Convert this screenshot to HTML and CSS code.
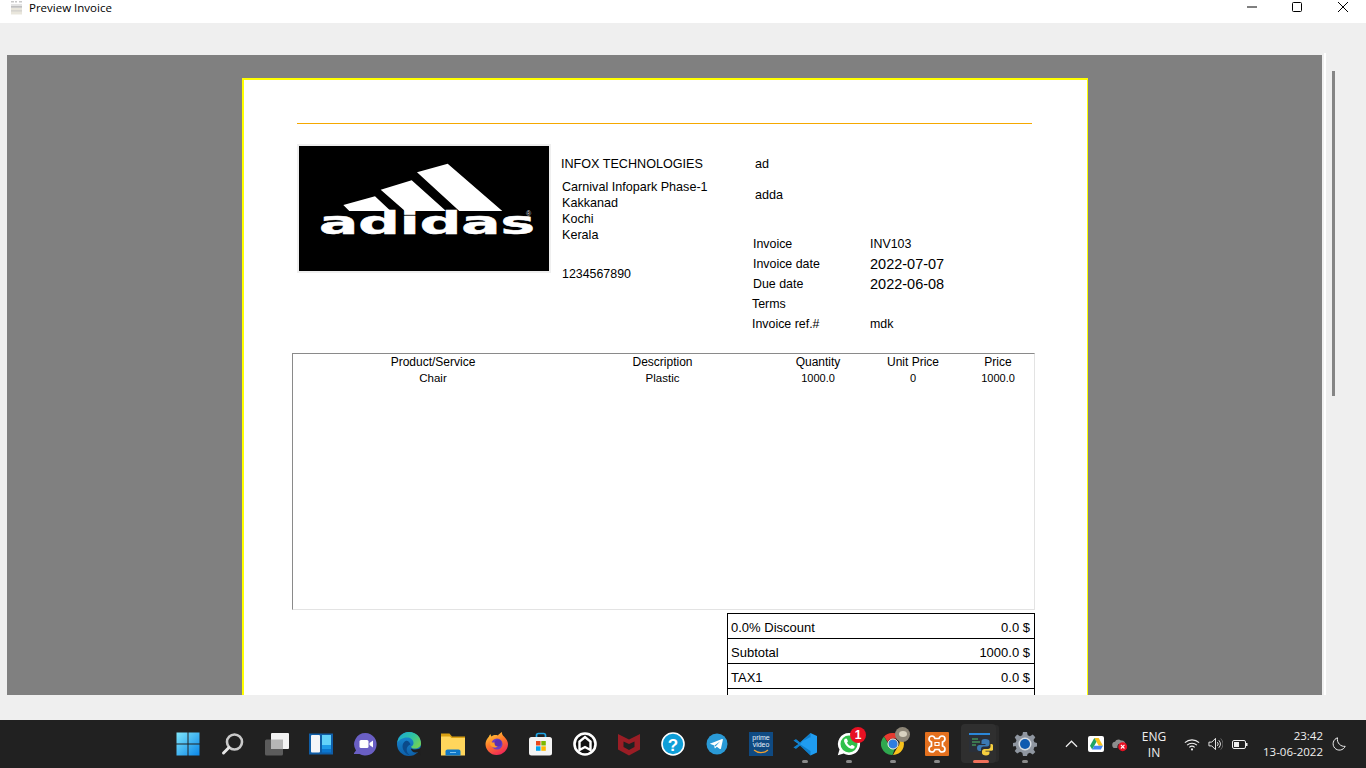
FILE: index.html
```html
<!DOCTYPE html>
<html lang="en">
<head>
<meta charset="utf-8">
<title>Preview Invoice</title>
<link rel="stylesheet" href="styles.css">
</head>
<body>
<div class="window">
  <header class="titlebar">
    <svg class="app-icon" viewBox="0 0 13 14"><path d="M1 0h3v1.500H1zM5 0h2v1.500H5zM9 0h3v1.500H9z" fill="#c8c8c8"/><path d="M1 3h11v3H1z" fill="#e4e4e4"/><path d="M1 5.500h11v1H1z" fill="#9a9a9a"/><path d="M1 7h11v6.500H1z" fill="#e9e6dc"/><path d="M1 9.500h11v.8H1z" fill="#c4c4c4"/></svg>
    <span class="title">Preview Invoice</span>
    <div class="win-btns">
      <span class="win-btn win-min"><svg viewBox="0 0 12 12" class="wb"><path d="M1 6h10" stroke="#000" fill="none"/></svg></span>
      <span class="win-btn"><svg viewBox="0 0 12 12" class="wb"><rect x="1.500" y="1.500" width="9" height="9" rx="1" stroke="#000" fill="none"/></svg></span>
      <span class="win-btn"><svg viewBox="0 0 12 12" class="wb"><path d="M1 1l10 10M11 1L1 11" stroke="#000" fill="none"/></svg></span>
    </div>
  </header>

  <main class="workspace">
    <div class="viewer-edge">
      <div class="viewer">
        <article class="paper">
          <div class="rule"></div>
          <section class="head">
            <div class="logo">
              <svg class="logo-svg" viewBox="0 0 250 125">
                <path fill="#fff" d="M118 26.300L148.700 17.700 203.300 65H160.300zM81.700 43.700L112.700 34.300 147 65H106zM44.300 59L76 50.300 91.700 65H50.300z"/>
                <text class="logo-word" x="20" y="88" textLength="216" lengthAdjust="spacingAndGlyphs">adidas</text>
                <text class="logo-r" x="227" y="70">®</text>
              </svg>
            </div>
            <div class="company">
              <div class="co-name">INFOX TECHNOLOGIES</div>
              <div class="co-addr">Carnival Infopark Phase-1<br>Kakkanad<br>Kochi<br>Kerala</div>
              <div class="co-phone">1234567890</div>
            </div>
            <div class="client">
              <div class="cl-name">ad</div>
              <div class="cl-addr">adda</div>
              <div class="meta">
                <div class="m-label nudge">Invoice</div><div class="m-val">INV103</div>
                <div class="m-label nudge">Invoice date</div><div class="m-date">2022-07-07</div>
                <div class="m-label nudge">Due date</div><div class="m-date">2022-06-08</div>
                <div class="m-label">Terms</div><div class="m-val"></div>
                <div class="m-label">Invoice ref.#</div><div class="m-val">mdk</div>
              </div>
            </div>
          </section>

          <section class="items">
            <div class="cell th">Product/Service</div><div class="cell th desc">Description</div><div class="cell th">Quantity</div><div class="cell th">Unit Price</div><div class="cell th">Price</div>
            <div class="cell">Chair</div><div class="cell desc">Plastic</div><div class="cell num">1000.0</div><div class="cell num">0</div><div class="cell num">1000.0</div>
          </section>

          <section class="totals">
            <div class="t-row"><span>0.0% Discount</span><span>0.0 $</span></div>
            <div class="t-row"><span>Subtotal</span><span>1000.0 $</span></div>
            <div class="t-row"><span>TAX1</span><span>0.0 $</span></div>
            <div class="t-row"></div>
          </section>
        </article>
      </div>
    </div>
    <div class="scroll"><div class="thumb"></div></div>
  </main>

  <footer class="taskbar">
    <div class="apps">
      <span class="tb tb-start"><svg class="ic" viewBox="0 0 24 24"><defs><linearGradient id="w" x1="0" y1="0" x2="1" y2="1"><stop offset="0" stop-color="#7fe6fb"/><stop offset="1" stop-color="#0a86e8"/></linearGradient></defs><path fill="url(#w)" d="M.500.500h11v11H.500zM12.500.500h11v11h-11zM.500 12.500h11v11H.500zM12.500 12.500h11v11h-11z"/></svg></span>
      <span class="tb"><svg class="ic" viewBox="0 0 24 24"><circle cx="13.500" cy="10" r="7.500" fill="none" stroke="#c9c9c9" stroke-width="2.600"/><path d="M8 15.500L2.500 21" stroke="#e6e6e6" stroke-width="3" stroke-linecap="round"/></svg></span>
      <span class="tb"><svg class="ic" viewBox="0 0 24 24"><rect x="0" y="7.500" width="18" height="16" rx="1.500" fill="#5c5c5c"/><rect x="6" y="1" width="18" height="16" rx="1" fill="#f2f2f2"/><rect x="6" y="7.500" width="12" height="9.500" fill="#b5b5b5"/></svg></span>
      <span class="tb"><svg class="ic" viewBox="0 0 24 24"><rect y="1.500" width="24" height="21" fill="#0f5ea8"/><rect x="2" y="3" width="9" height="17.500" rx="1" fill="#f4f6f8"/><rect x="13" y="3" width="9" height="10" fill="#62d2fa"/><rect x="13" y="13" width="9" height="4" fill="#1e9be8"/><rect x="13" y="17" width="9" height="3.500" fill="#0b77d0"/></svg></span>
      <span class="tb"><svg class="ic" viewBox="0 0 24 24"><path fill="#6a5fc4" d="M12.500 1a11.300 11.300 0 1 1-6 21H1.500c-.6 0-.8-.6-.4-1l1.900-2.500A11.300 11.300 0 0 1 12.500 1z"/><rect x="6.500" y="8" width="9" height="8" rx="1.500" fill="#fff"/><path fill="#fff" d="M16.500 11l3.500-2.500v7L16.500 13z"/></svg></span>
      <span class="tb"><svg class="ic" viewBox="0 0 24 24"><defs><linearGradient id="eb" x1="0" y1="0" x2="0" y2="1"><stop offset="0" stop-color="#1a8fd6"/><stop offset="1" stop-color="#0d5fa8"/></linearGradient><linearGradient id="eg" x1="0" y1="0" x2="1" y2=".6"><stop offset="0" stop-color="#1aa7d8"/><stop offset=".6" stop-color="#2fc4a0"/><stop offset="1" stop-color="#6fd05a"/></linearGradient></defs><circle cx="12" cy="12" r="12" fill="url(#eb)"/><path fill="url(#eg)" d="M12 0c7 0 12 5 12 11.500 0 3.500-3 5-6 5-2.500 0-4-1-4-1.800 1.500-.7 2.500-2 2.500-3.700 0-3.500-3.300-5.500-6.500-5.500C5.500 5.500 2 8 .4 10.500 1.300 4.500 6 0 12 0z"/><path fill="#0b4a8a" d="M8.500 9c-3 1.500-4 6-1.500 10 1.500 2.400 4 4 6.500 4.700-3-2-4.500-5-3.500-8 .5-1.500 2-2.700 3.500-3.200-1-2.500-3-4.500-5-3.500z"/><path fill="#202020" d="M24 15.500c-1 1.200-3.500 2-6 2-1.500 0-3-.3-4-1 0 3 3.500 5 6.500 3.500L24 24z"/></svg></span>
      <span class="tb"><svg class="ic" viewBox="0 0 24 24"><path fill="#d9a012" d="M0 1.500h8.500l2.500 3h13v4H0z"/><path fill="#ffd65c" d="M0 4.500h9l1.500 1.500H24v17.500H0z"/><path fill="#0f78c8" d="M4.500 19.500c0-1.200.8-2 2-2h11c1.200 0 2 .8 2 2v4h-15z"/><path fill="#7cc3f2" d="M9 20h6v1H9z"/></svg></span>
      <span class="tb"><svg class="ic" viewBox="0 0 24 24"><defs><linearGradient id="ff" x1=".2" y1="0" x2=".7" y2="1"><stop offset="0" stop-color="#ffd43a"/><stop offset=".45" stop-color="#ff7a2a"/><stop offset="1" stop-color="#f0225a"/></linearGradient></defs><path fill="url(#ff)" d="M4 4.500C4.500 3 5 2.500 5.500 2c0 1 .3 1.700 1 2.500C8.500 3 11 2.700 13 3.500c.5-1.200 2.500-2.500 4-3.500-.3 1.500.4 3 2 4.500 2.500 2.500 4 5 4 7.500 0 6-5 11-11.500 11C5.500 23 .5 18 .5 12 .5 9.500 2 6.500 4 4.500z"/><circle cx="12" cy="12" r="5.500" fill="#6a3fc4"/><path fill="#ff9a2a" d="M5 9c2 2.500 4 1 6.500 1.500 2 .5 2.500 2.500 1 4-1 1-3 1.500-5 .5C5.500 14.500 4.500 12 5 9z"/><circle cx="13" cy="11" r="3.500" fill="#5b2fb0"/></svg></span>
      <span class="tb"><svg class="ic" viewBox="0 0 24 24"><path fill="none" stroke="#1ea5e6" stroke-width="1.700" d="M7.500 6.500V3.500c0-1 .7-2 2-2h5c1.300 0 2 1 2 2v3"/><rect y="5" width="23" height="18.500" rx="2.500" fill="#f4f4f4"/><path fill="#e8491d" d="M7 9h4.500v4.500H7z"/><path fill="#7db900" d="M12.300 9h4.500v4.500h-4.500z"/><path fill="#00a4ef" d="M7 14.300h4.500v4.500H7z"/><path fill="#ffb900" d="M12.300 14.300h4.500v4.500h-4.500z"/></svg></span>
      <span class="tb"><svg class="ic" viewBox="0 0 24 24"><circle cx="12" cy="12" r="10.500" fill="#111" stroke="#fff" stroke-width="2.600"/><path fill="none" stroke="#fff" stroke-width="2.400" d="M6.500 18V9.500L12 5l5.500 4.500V18L12 15z"/></svg></span>
      <span class="tb"><svg class="ic" viewBox="0 0 24 24"><path fill="#9a1d25" d="M1 2l11 5.500L23 2v15.500L12 23.500 1 17.500zM6.500 9.500v5.500L12 18l5.500-3V9.500L12 12z"/></svg></span>
      <span class="tb"><svg class="ic" viewBox="0 0 24 24"><circle cx="12" cy="12" r="11" fill="#0e9ed8" stroke="#fff" stroke-width="1.600"/><text class="help-q" x="12" y="18.500" text-anchor="middle">?</text></svg></span>
      <span class="tb"><svg class="ic" viewBox="0 0 24 24"><circle cx="12" cy="12" r="10.500" fill="#2a9ad6"/><path fill="#fff" d="M5.500 11.500L17 7c.6-.2 1 .2.900.8L16 16.500c-.1.600-.7.800-1.200.4l-3-2.200-1.500 1.500c-.3.300-.7.100-.7-.3l-.3-2.500-3.800-1.300c-.6-.2-.6-.5 0-.6z"/><path fill="#2a9ad6" d="M9.500 13.500l5.500-4-4.500 5z"/></svg></span>
      <span class="tb"><span class="prime"><span class="prime-w">prime</span><span class="prime-w">video</span><svg class="prime-arc" viewBox="0 0 16 5"><path d="M1 1c4 3.500 10 3.500 14 0" fill="none" stroke="#f0a030" stroke-width="1.200"/></svg></span></span>
      <span class="tb"><svg class="ic" viewBox="0 0 24 24"><path fill="#1f9cf0" d="M17.500 1L24 4v16.500L17.500 23.500 7 13.500l-4 3.200L.5 15.500 5.500 12 .5 8.500 3 7.300l4 3.200z"/><path fill="#0065a9" d="M17.500 1v22.500L7 13.500 3 16.700.5 15.500 5.500 12l2 .5 10 6.500V5L7 10.500 3 7.300.5 8.500l6.500 3.500z" opacity=".55"/></svg><i class="dot"></i></span>
      <span class="tb"><svg class="ic" viewBox="0 0 24 24"><path fill="#fff" d="M12 1a11 11 0 1 1-5.300 20.600L.8 23.300l1.700-5.700A11 11 0 0 1 12 1z"/><circle cx="12" cy="12" r="8.500" fill="#31c04a"/><path fill="#fff" d="M8.500 6.800c.6-.4 1.200-.3 1.500.3l.8 1.800c.2.400 0 .8-.2 1.100l-.6.700c.8 1.500 2 2.700 3.500 3.400l.8-.8c.3-.3.700-.4 1.100-.2l1.800.9c.5.300.6.800.3 1.400-.7 1.300-2 1.700-3.400 1.300-3.300-1-6-3.700-6.900-7-.3-1.200 0-2.200.8-2.900z"/></svg><span class="badge">1</span><i class="dot"></i></span>
      <span class="tb"><svg class="ic" viewBox="0 0 24 24"><path fill="#e53a30" d="M12 1a11 11 0 0 1 9.500 5.500H12a5.500 5.500 0 0 0-5.200 3.500L3 4.500A11 11 0 0 1 12 1z"/><path fill="#f8c21c" d="M21.500 6.500A11 11 0 0 1 12 23l4.700-8.200A5.500 5.500 0 0 0 16.800 6.500z"/><path fill="#2fa84f" d="M3 4.500l4.700 8.100a5.500 5.500 0 0 0 6 4.100L11.500 23A11 11 0 0 1 3 4.500z"/><circle cx="12" cy="12" r="4.500" fill="#2f7de0"/><circle cx="12" cy="12" r="5" fill="none" stroke="#fff"/></svg><span class="avatar"><i class="avatar-in"></i></span><i class="dot"></i></span>
      <span class="tb"><svg class="ic" viewBox="0 0 24 24"><rect width="24" height="24" rx="1" fill="#e4701e"/><path fill="none" stroke="#fff" stroke-width="1.700" d="M7 4a3 3 0 0 0-3 3c0 1.500 1 2.500 2.500 3v4C5 14.500 4 15.500 4 17a3 3 0 0 0 3 3c1.500 0 2.500-1 3-2.500h4c.5 1.500 1.500 2.500 3 2.500a3 3 0 0 0 3-3c0-1.500-1-2.500-2.500-3v-4C19 9.500 20 8.500 20 7a3 3 0 0 0-3-3c-1.500 0-2.500 1-3 2.500h-4C9.500 5 8.500 4 7 4z"/><path d="M10 10.500h4v3h-4z" fill="none" stroke="#fff" stroke-width="1.200"/></svg><i class="dot"></i></span>
      <span class="tb active"><svg class="ic" viewBox="0 0 24 24"><rect x="0" y="1" width="21" height="19" fill="#2a2f38"/><rect x="0" y="1" width="21" height="2" fill="#2b87d8"/><path d="M3 7h6M3 10h8M3 13h4" stroke="#4ec06a" stroke-width="1"/><path fill="#3a79b4" d="M15 7c-3 0-3.500 1-3.500 2.500V12h4v1h-6c-1.500 0-2.500 1-2.500 3s1 3 2.500 3H11v-2c0-1.500 1-2.500 2.500-2.500h3.500c1.500 0 2.500-1 2.500-2.500V9.500C19.500 8 18 7 15 7z" transform="translate(1 0)"/><path fill="#f7cf3e" d="M21.500 12v2.500c0 1.500-1 2.500-2.500 2.500h-3.500c-1.500 0-2.500 1-2.500 2.500V21c0 1.500 1.500 2.500 4 2.500s3.500-1 3.500-2.500v-1.500h-4v-.8h6c1.500 0 2-1.200 2-3.200s-.8-3.500-2-3.500z"/></svg><i class="run"></i></span>
      <span class="tb"><svg class="ic" viewBox="0 0 24 24"><path fill="#8f96a0" d="M10 0h4l.7 3.300 2.200.9L19.800 2.500l2.500 2.700-1.800 2.700.9 2.300L24 11v3.500l-2.600.6-.9 2.300 1.800 2.700-2.500 2.400-2.900-1.700-2.200.9L14 24h-4l-.7-3.300-2.200-.9-2.900 1.700-2.500-2.400 1.800-2.700-.9-2.300L0 14.500V11l2.600-.5.9-2.300L1.700 5.200l2.500-2.700 2.900 1.700 2.200-.9z"/><circle cx="12" cy="12" r="6.500" fill="#d8dde2"/><circle cx="12" cy="12" r="5" fill="#0f5bb0"/></svg><i class="dot"></i></span>
    </div>
    <div class="tray">
      <svg class="chev" viewBox="0 0 14 8"><path d="M1 7l6-6 6 6" fill="none" stroke="#eee" stroke-width="1.300"/></svg>
      <span class="drive"><svg viewBox="0 0 12 11" class="drive-svg"><path fill="#f8c21c" d="M4 0h4l4 7H8z"/><path fill="#1fa463" d="M4 0l2 3.500L2 10.500 0 7z"/><path fill="#4285f4" d="M4 7h8l-2 3.500H2z"/></svg></span>
      <svg class="cloud" viewBox="0 0 18 16"><path fill="#8d8d8d" d="M4 12a3.500 3.500 0 0 1-.5-7C4.500 2.500 8 1.500 10 3.500c2.500-.5 5 1 5 4H8c-1.500 0-2 2-2 4.500z"/><circle cx="12" cy="10.500" r="5" fill="#e81123"/><path d="M10 8.500l4 4M14 8.500l-4 4" stroke="#fff" stroke-width="1.200"/></svg>
      <div class="lang"><div>ENG</div><div>IN</div></div>
      <svg class="wifi" viewBox="0 0 18 14"><path d="M1 5a11.500 11.500 0 0 1 16 0M3.500 7.800a8 8 0 0 1 11 0M6 10.300a4.300 4.300 0 0 1 6 0" fill="none" stroke="#eee" stroke-width="1.200"/><circle cx="9" cy="12.500" r="1.200" fill="#eee"/></svg>
      <svg class="vol" viewBox="0 0 16 14"><path d="M1 5h3l4-4v12L4 9H1z" fill="none" stroke="#eee"/><path d="M10 5a3 3 0 0 1 0 4M11.500 3a6 6 0 0 1 0 8" fill="none" stroke="#eee"/><path d="M13.500 1a8.500 8.500 0 0 1 0 12" fill="none" stroke="#666"/></svg>
      <svg class="batt" viewBox="0 0 16 9"><rect x=".5" y=".5" width="13" height="8" rx="1.500" fill="none" stroke="#eee"/><rect x="2" y="2" width="5" height="5" fill="#eee"/><rect x="14" y="3" width="1.500" height="3" fill="#eee"/></svg>
      <div class="clock"><div>23:42</div><div>13-06-2022</div></div>
      <svg class="moon" viewBox="0 0 14 14"><path d="M5.500 .8a6.300 6.300 0 1 0 7.700 8.500C9 10 4.500 6 5.500 .8z" fill="none" stroke="#eee"/></svg>
    </div>
  </footer>
</div>
</body>
</html>
```
FILE: styles.css
```css
* { box-sizing: border-box; }
html, body { margin: 0; height: 100%; overflow: hidden; }
body { font-family: "Liberation Sans", Arial, sans-serif; color: #000; }
.window { width: 1366px; height: 768px; display: flex; flex-direction: column; background: #efefef; }

.titlebar { height: 23px; background: #fff; display: flex; align-items: flex-start; padding-left: 10px; }
.app-icon { width: 13px; height: 14px; margin-top: 1px; }
.title { font: 11.500px/15px "Open Sans", "Noto Sans", sans-serif; margin-left: 6px; }
.win-btns { margin-left: auto; display: flex; }
.win-btn { width: 46px; height: 14px; display: flex; justify-content: center; }
.win-min { padding-left: 2px; }
.wb { width: 12px; height: 12px; margin-top: 1px; }

.workspace { flex: 1; display: flex; padding: 30px 0 25px 7px; min-height: 0; }
.viewer-edge { width: 1319px; padding: 2px 2px 0 0; border-right: 2px solid #fff; }
.viewer { height: 640px; width: 1315px; background: #808080; overflow: hidden; padding: 23px 0 0 235px; }
.scroll { margin-left: 6px; width: 3px; }
.thumb { margin-top: 18px; height: 325px; background: #858585; }

.paper { width: 846px; height: 800px; background: #fff; border: solid #ff0; border-width: 2px 1.500px 0 2px; padding: 43px 0 0 48px; }
.rule { height: 1px; width: 735px; margin-left: 5px; background: #f5a800; }

.head { display: grid; grid-template-columns: 263px 191px 1fr; margin: 21px 0 0 6px; height: 188px; font-size: 12.600px; line-height: 16px; }
.logo { width: 252px; height: 127px; background: #000; border: 1px solid #eee; box-shadow: 0 0 0 1px #efefef; }
.logo-svg { display: block; width: 250px; height: 125px; }
.logo-word { font: bold 32px "DejaVu Sans", sans-serif; fill: #fff; stroke: #fff; stroke-width: .5px; }
.logo-r { font: 7px "Liberation Sans", sans-serif; fill: #ddd; }

.company { padding-top: 11px; }
.co-addr { margin-top: 7px; padding-left: 1px; }
.co-phone { margin-top: 23px; padding-left: 1px; font-size: 12.400px; }

.client { padding-top: 11px; }
.cl-name { padding-left: 3px; }
.cl-addr { margin-top: 15px; padding-left: 3px; }
.meta { display: grid; grid-template-columns: 118px 1fr; grid-auto-rows: 20px; margin-top: 31px; line-height: 20px; font-size: 12.400px; }
.nudge { padding-left: 1px; }
.m-date { font-size: 14.500px; }

.items { width: 743px; height: 257px; margin-top: 20px; border: solid; border-width: 1px; border-color: #8a8a8a #e3e3e3 #e3e3e3 #8a8a8a; display: grid; grid-template-columns: 280px 200px 90px 100px 70px; grid-auto-rows: 17px; align-content: start; font: 11.500px/15px "Liberation Sans", sans-serif; text-align: center; }
.th { font-size: 12px; padding-top: 1px; }
.num { font-size: 11px; }
.desc { padding-right: 21px; }

.totals { width: 308px; margin: 3px 0 0 435px; border: solid #000; border-width: 0 1px; font-size: 13px; }
.t-row { height: 25px; border-top: 1px solid #000; display: flex; justify-content: space-between; align-items: center; padding: 2px 4px 0 3px; }

.taskbar { height: 48px; background: #212121; color: #f0f0f0; display: flex; align-items: center; padding-left: 167px; }
.apps { display: flex; width: 880px; }
.tb { position: relative; width: 44px; height: 48px; display: flex; align-items: center; justify-content: center; }
.tb-start { margin-left: -1px; margin-right: 1px; }
.ic { width: 24px; height: 24px; display: block; }
.help-q { font: bold 17px "Liberation Sans", sans-serif; fill: #fff; }
.dot { position: absolute; left: 19px; bottom: 5px; width: 6px; height: 3px; border-radius: 2px; background: #8a8a8a; }
.active::before { content: ""; position: absolute; left: 2px; top: 4px; width: 35px; height: 39px; border-radius: 4px; background: #2f2f2f; box-shadow: 4px 0 0 -1px #2a2a2a; }
.active .ic { position: relative; }
.run { position: absolute; left: 14px; bottom: 5px; width: 16px; height: 3px; border-radius: 2px; background: #f0705a; }
.prime { width: 24px; height: 24px; background: #0f4a82; display: flex; flex-direction: column; align-items: center; color: #e6f2fa; font: 7px/7px "Liberation Sans", sans-serif; padding-top: 2px; }
.prime-w { display: block; }
.prime-arc { width: 16px; height: 5px; margin-top: 1px; }
.badge { position: absolute; left: 23px; top: 7px; width: 16px; height: 16px; border-radius: 50%; background: #e81123; color: #fff; font: bold 12px/16px "Liberation Sans", sans-serif; text-align: center; }
.avatar { position: absolute; left: 24px; top: 7px; width: 15px; height: 15px; border-radius: 50%; background: #8d8677; }
.avatar-in { display: block; width: 8px; height: 6px; margin: 4px 0 0 4px; border-radius: 50%; background: #d8d2c0; }

.tray { width: 319px; height: 48px; display: flex; align-items: center; }
.chev { width: 13px; height: 8px; margin-left: 18px; }
.drive { width: 16px; height: 16px; background: #fff; border-radius: 2px; margin-left: 10px; display: flex; align-items: center; justify-content: center; }
.drive-svg { width: 13px; height: 12px; }
.cloud { width: 16px; height: 15px; margin-left: 8px; }
.lang { width: 40px; margin-left: 6px; padding-top: 1px; text-align: center; font: 12px/16px "Open Sans", sans-serif; }
.wifi { width: 16px; height: 13px; margin-left: 10px; }
.vol { width: 15px; height: 14px; margin-left: 8px; }
.batt { width: 16px; height: 9px; margin-left: 9px; }
.clock { width: 75px; text-align: right; font: 11.500px/16px "Open Sans", sans-serif; }
.moon { width: 14px; height: 14px; margin-left: 9px; }
```
